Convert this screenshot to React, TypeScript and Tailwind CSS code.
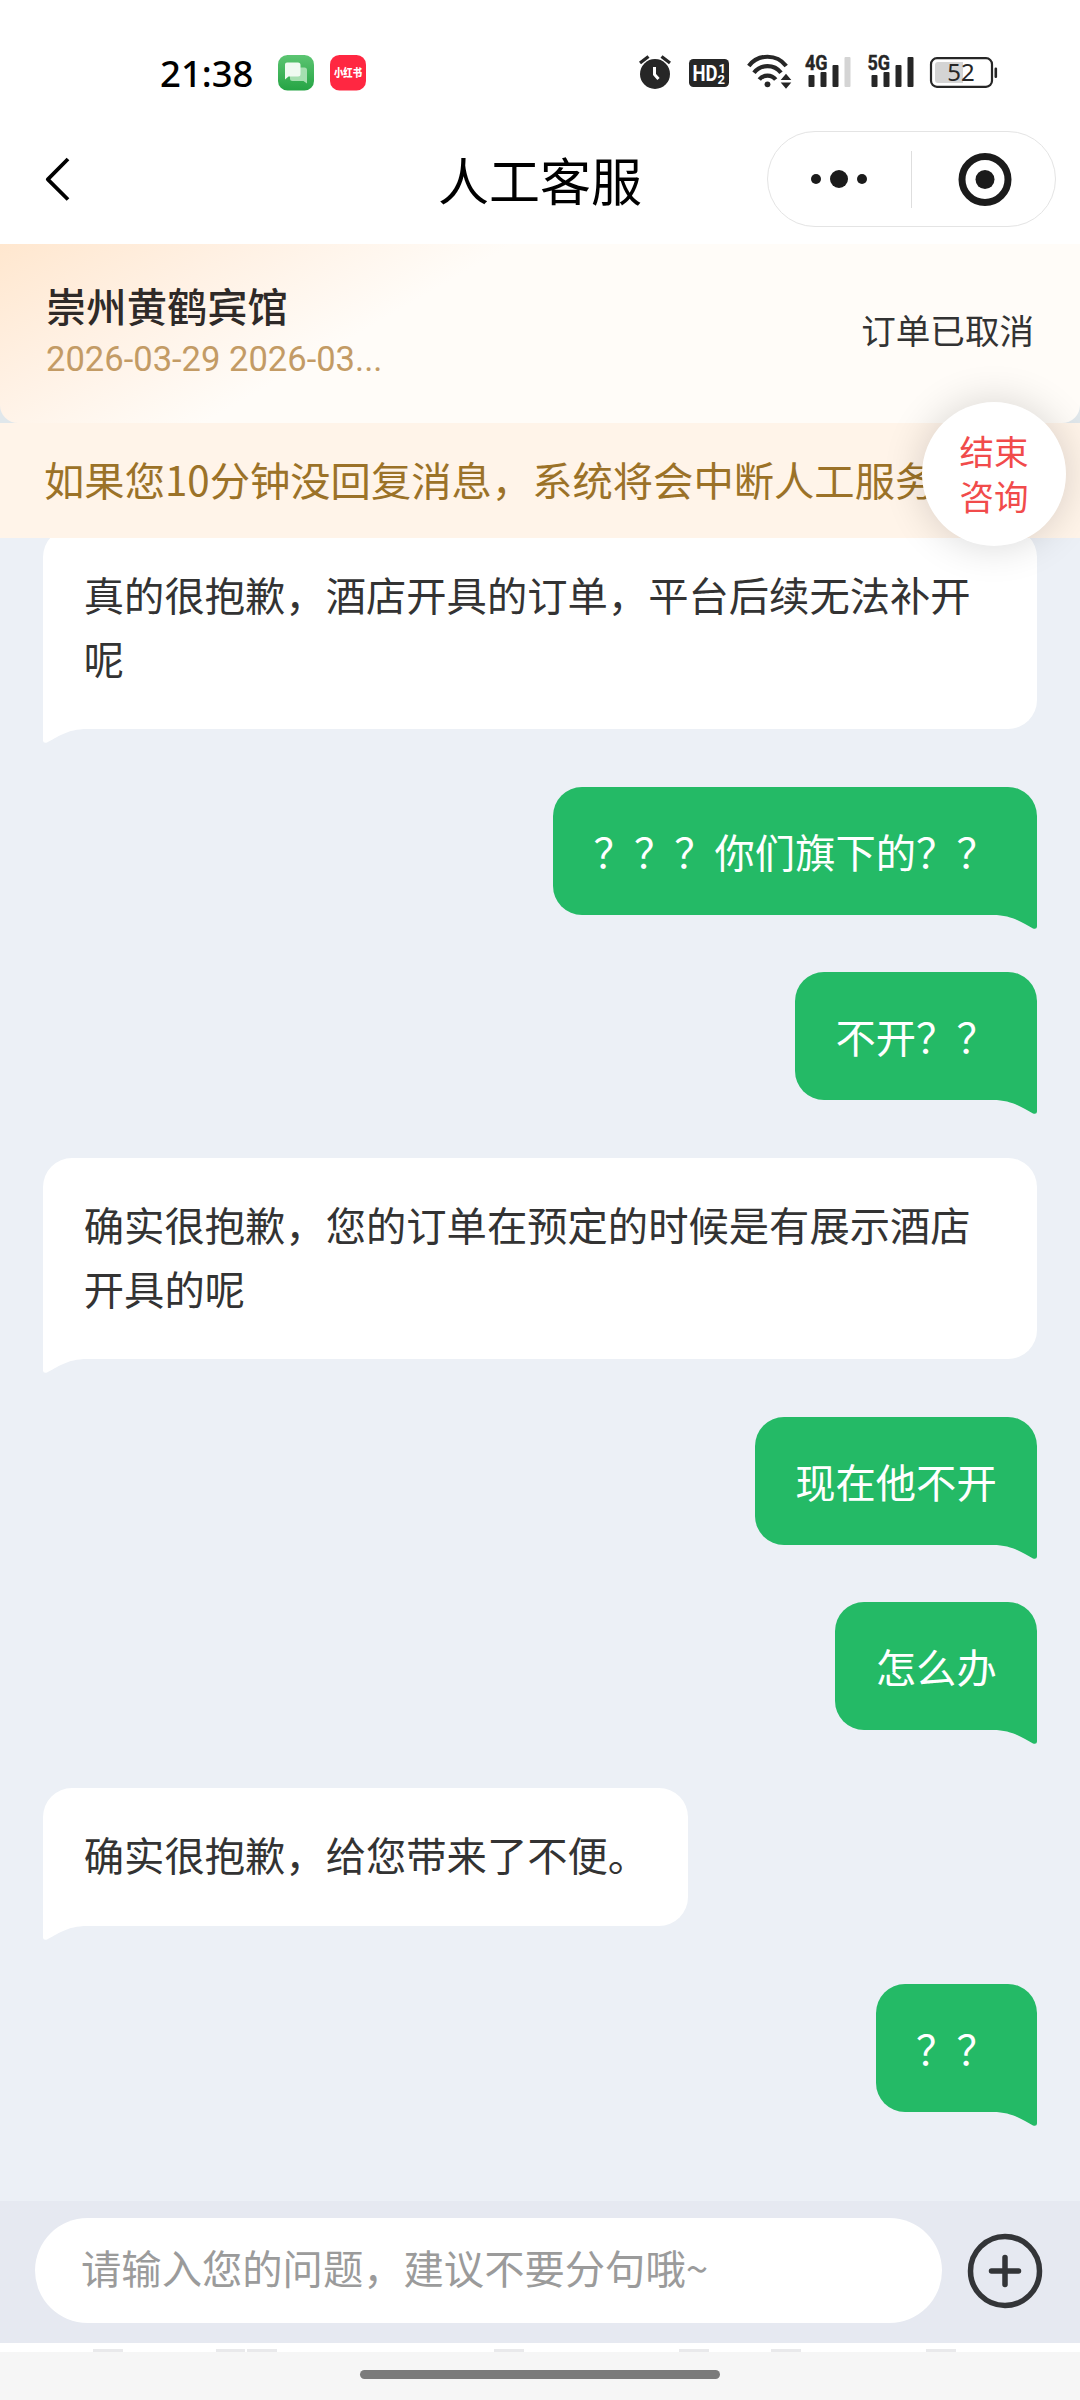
type Message = {
	from: "agent" | "user";
	text: string;
	spacing: string;
};

const messages: Message[] = [
	{
		from: "agent",
		text: "真的很抱歉，酒店开具的订单，平台后续无法补开呢",
		spacing: "-mt-[10px]",
	},
	{ from: "user", text: "？？？你们旗下的？？", spacing: "mt-[58px]" },
	{ from: "user", text: "不开？？", spacing: "mt-[57px]" },
	{
		from: "agent",
		text: "确实很抱歉，您的订单在预定的时候是有展示酒店开具的呢",
		spacing: "mt-[58px]",
	},
	{ from: "user", text: "现在他不开", spacing: "mt-[58px]" },
	{ from: "user", text: "怎么办", spacing: "mt-[57px]" },
	{ from: "agent", text: "确实很抱歉，给您带来了不便。", spacing: "mt-[58px]" },
	{ from: "user", text: "？？", spacing: "mt-[58px]" },
];

const StatusBar = () => {
	return (
		<div className="flex h-[110px] items-start justify-between pl-[160px] pr-[82px] pt-[40px]">
			<div className="flex items-start">
				<span className="mt-[15px] w-[118px] font-['Noto_Sans'] text-[36.5px] font-medium leading-[36px] text-black">
					21:38
				</span>
				<svg className="mt-[15px] h-[36px] w-[36px]" viewBox="0 0 36 36">
					<defs>
						<linearGradient id="msg" x1="0" y1="0" x2="0" y2="1">
							<stop offset="0" stopColor="#5cc572" />
							<stop offset="1" stopColor="#25a444" />
						</linearGradient>
					</defs>
					<rect width="36" height="35.5" rx="9.5" fill="url(#msg)" />
					<path
						d="M15 12.5h11.500a2.500 2.500 0 0 1 2.500 2.500v13.500l-3.500-2.500H14.500a2.500 2.500 0 0 1-2.500-2.500V15z"
						fill="#a5dfb0"
					/>
					<path
						d="M9 7.500h11a2.500 2.500 0 0 1 2.500 2.500v9a2.500 2.500 0 0 1-2.500 2.500H10.500L7 24.500V9.500a2 2 0 0 1 2-2z"
						fill="#effaf1"
					/>
				</svg>
				<svg className="ml-[16px] mt-[15px] h-[36px] w-[36px]" viewBox="0 0 36 36">
					<rect width="36" height="35.5" rx="9.5" fill="#ff2741" />
					<text
						x="18"
						y="21.8"
						textAnchor="middle"
						textLength="28"
						lengthAdjust="spacingAndGlyphs"
						fontSize="11"
						fontWeight="900"
						fill="#fff"
						fontFamily="Noto Sans CJK SC"
					>
						小红书
					</text>
				</svg>
			</div>

			<svg className="h-[70px] w-[362px]" viewBox="16 0 362 70" fill="#262626">
				{/* alarm */}
				<circle cx="35" cy="34" r="15" />
				<path d="M20 23l8.500-6.500M50 23L41.500 16.500" stroke="#262626" strokeWidth="3.3" />
				<path d="M34.500 27v7.500l4 4.500" stroke="#fff" strokeWidth="3" fill="none" />

				{/* HD */}
				<rect x="69" y="19" width="40" height="28" rx="4.5" />
				<g fill="#fff" fontFamily="Roboto" fontWeight="700">
					<text x="72.5" y="41" fontSize="21.5" textLength="25" lengthAdjust="spacingAndGlyphs">
						HD
					</text>
					<text x="98.5" y="32.5" fontSize="13">1</text>
					<text x="97.5" y="44" fontSize="13">2</text>
				</g>

				{/* wifi */}
				<g fill="none" stroke="#262626" strokeWidth="4.2">
					<path d="M128.800 26a23.500 23.500 0 0 1 37.400 0" />
					<path d="M134 32.800a17 17 0 0 1 27 0" />
					<path d="M139.300 39.500a10.500 10.500 0 0 1 16.400 0" />
				</g>
				<circle cx="147.5" cy="44.3" r="2.9" />
				<path d="M166 33.800l5.300 6.200h-10.600zM166 48.800l5.300-6.200h-10.600z" />

				{/* network labels */}
				<g fontFamily="Roboto" fontWeight="700" stroke="#262626" strokeWidth="0.4">
					<text x="185" y="30" fontSize="20.5" textLength="22.5" lengthAdjust="spacingAndGlyphs">
						4G
					</text>
					<text x="247.5" y="30" fontSize="20.5" textLength="22.5" lengthAdjust="spacingAndGlyphs">
						5G
					</text>
				</g>
				<rect x="188.5" y="35" width="6" height="12" rx="1" />
				<rect x="200.5" y="32" width="6" height="15" rx="1" />
				<rect x="212.5" y="25" width="6" height="22" rx="1" />
				<rect x="224.5" y="17" width="6" height="30" rx="1" fill="#d4d4d4" />

				<rect x="251.5" y="35" width="6" height="12" rx="1" />
				<rect x="263.5" y="32" width="6" height="15" rx="1" />
				<rect x="275.5" y="25" width="6" height="22" rx="1" />
				<rect x="287.5" y="17" width="6" height="30" rx="1" />

				{/* battery */}
				<rect x="311" y="18.2" width="61" height="28.6" rx="6" fill="none" stroke="#262626" strokeWidth="2.2" />
				<path d="M318 22h25v21h-25a3 3 0 0 1-3-3V25a3 3 0 0 1 3-3z" fill="#d4d4d4" />
				<rect x="374.5" y="27.5" width="2.6" height="10.5" rx="1.2" />
				<text x="341" y="41.3" fontSize="24" textAnchor="middle" fontFamily="Noto Sans">
					52
				</text>
			</svg>
		</div>
	);
};

const NavBar = () => {
	return (
		<div className="flex h-[134px] items-start justify-between pl-[40px] pr-[24px] pt-[21px]">
			<div className="flex h-[96px] w-[273px] items-center">
				<svg className="h-[50px] w-[36px]" viewBox="0 0 36 50" fill="none">
					<path
						d="M28 5L7.800 25.300 28 45.500"
						stroke="#000"
						strokeWidth="3.8"
						strokeLinejoin="round"
					/>
				</svg>
			</div>
			<h1 className="text-[51px] leading-[96px] text-black">人工客服</h1>
			<div className="flex h-[96px] w-[289px] items-center rounded-full border border-[#e4e4e4]">
				<svg className="h-[94px] w-[143px]" viewBox="0 0 143 94" fill="#1b1b1b">
					<circle cx="48" cy="47" r="5" />
					<circle cx="71" cy="47" r="9" />
					<circle cx="94" cy="47" r="5" />
				</svg>
				<div className="h-[57px] w-px bg-[#dedede]"></div>
				<svg className="h-[94px] w-[143px]" viewBox="0 0 143 94">
					<circle cx="73" cy="47.5" r="23" fill="none" stroke="#1b1b1b" strokeWidth="7" />
					<circle cx="73" cy="47.5" r="9.5" fill="#1b1b1b" />
				</svg>
			</div>
		</div>
	);
};

const OrderCard = () => {
	return (
		<div className="bg-[#e0e7eb]">
			<div className="flex h-[179px] items-center justify-between rounded-b-[18px] bg-[linear-gradient(150deg,#ffe7cf_0%,#fff1e4_18%,#fffcf8_37%)] px-[46px] pb-[7px]">
				<div className="flex flex-col">
					<span className="text-[40.32px] font-medium leading-[56px] text-[#2f2a28]">
						崇州黄鹤宾馆
					</span>
					<span className="mt-[2px] font-[Roboto] text-[34.56px] leading-[48px] text-[#c39b65]">
						2026-03-29 2026-03...
					</span>
				</div>
				<span className="text-[34.56px] text-[#333]">订单已取消</span>
			</div>
		</div>
	);
};

const Notice = () => {
	return (
		<div className="relative z-10 flex h-[115px] items-center bg-[#fff4e9] pb-[3px] pl-[44px]">
			<p className="whitespace-nowrap text-[40.32px] text-[#9b7228]">
				如果您10分钟没回复消息，系统将会中断人工服务
			</p>
			<button className="absolute -top-[21px] right-[14px] flex h-[144px] w-[144px] items-center justify-center rounded-full bg-white pb-[2px] text-[34.56px] leading-[45px] text-[#f14b4b] shadow-[0_0_40px_rgba(0,0,0,0.16)]">
				<span>
					结束
					<br />
					咨询
				</span>
			</button>
		</div>
	);
};

const Bubble = ({ from, text, spacing }: Message) => {
	if (from === "user") {
		return (
			<div
				className={`${spacing} relative flex h-[128px] items-center self-end rounded-[29px] rounded-br-none bg-[#24ba66] px-[40.3px] pb-px text-white`}
			>
				{text}
				<svg className="absolute -bottom-[14px] right-0 h-[15px] w-[44px]" viewBox="0 0 44 15">
					<path d="M0 0H44V12.500Q44 15.500 40 14.500C30 9.500 20 1 0 1z" fill="#24ba66" />
				</svg>
			</div>
		);
	}
	return (
		<div
			className={`${spacing} relative min-h-[138px] self-start rounded-[29px] rounded-bl-none bg-white pb-[39px] pl-[40.8px] pr-[39.6px] pt-[34px] text-[#333]`}
		>
			{text}
			<svg className="absolute -bottom-[14px] left-0 h-[15px] w-[44px]" viewBox="0 0 44 15">
				<path d="M44 0H0V12.500Q0 15.500 4 14.500C14 9.500 24 1 44 1z" fill="#fff" />
			</svg>
		</div>
	);
};

const InputBar = () => {
	return (
		<div className="flex h-[142px] items-start bg-[#e6e9f1] pl-[35px] pt-[17px]">
			<div className="flex h-[105px] w-[907px] items-center rounded-full bg-white pb-[6px] pl-[46px] text-[40.32px] text-[#9b9b9b]">
				请输入您的问题，建议不要分句哦~
			</div>
			<svg className="ml-[24px] mt-[14px] h-[78px] w-[78px]" viewBox="0 0 78 78" fill="none" stroke="#333538">
				<circle cx="39" cy="39" r="34.5" strokeWidth="5.5" />
				<path d="M25.500 39h27M39 25.500v27" strokeWidth="5.5" strokeLinecap="round" />
			</svg>
		</div>
	);
};

const App = () => {
	return (
		<div className="flex h-[2400px] w-[1080px] flex-col overflow-hidden bg-white font-['Noto_Sans_CJK_SC',sans-serif]">
			<StatusBar />
			<NavBar />
			<OrderCard />
			<Notice />
			<div className="flex h-[1663px] flex-col bg-[#ecf0f6] px-[43px] text-[40.32px] leading-[64px]">
				{messages.map((message, index) => (
					<Bubble key={index} {...message} />
				))}
			</div>
			<InputBar />
			<div className="flex h-[9px] items-end bg-white">
				<div className="ml-[93px] h-[3px] w-[30px] bg-[#e9e9eb]"></div>
				<div className="ml-[93px] h-[3px] w-[29px] bg-[#e9e9eb]"></div>
				<div className="ml-[2px] h-[3px] w-[30px] bg-[#e9e9eb]"></div>
				<div className="ml-[217px] h-[3px] w-[30px] bg-[#e9e9eb]"></div>
				<div className="ml-[155px] h-[3px] w-[30px] bg-[#e9e9eb]"></div>
				<div className="ml-[62px] h-[3px] w-[30px] bg-[#e9e9eb]"></div>
				<div className="ml-[125px] h-[3px] w-[30px] bg-[#e9e9eb]"></div>
			</div>
			<div className="flex h-[48px] justify-center bg-[#f6f6f6] pt-[18px]">
				<div className="h-[9px] w-[360px] rounded-full bg-[#7b7b7b]"></div>
			</div>
		</div>
	);
};

export default App;
